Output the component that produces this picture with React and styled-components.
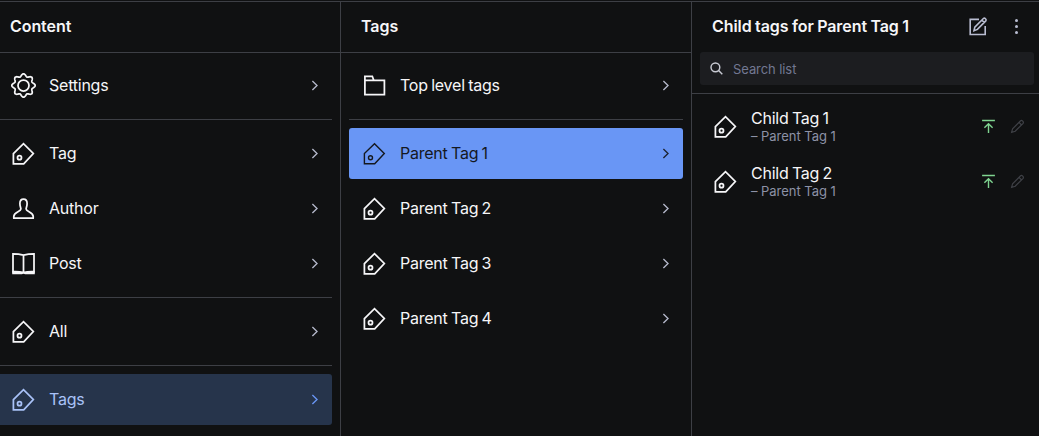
import React from 'react';
import styled, { createGlobalStyle, css } from 'styled-components';

const GlobalStyle = createGlobalStyle`
  * { box-sizing: border-box; }
  body {
    margin: 0;
    background: #101112;
    color: #f6f6f8;
    font-family: Inter, "Liberation Sans", sans-serif;
    font-size: 16px;
    overflow: hidden;
  }
`;

const line = '#3d3f45';

const Desk = styled.div`
  display: grid;
  grid-template-columns: 341px 351px 1fr;
  height: 436px;
  padding-top: 1px;
  overflow: hidden;
`;

const Pane = styled.section`
  border-top: 1px solid ${line};
  border-right: ${(p) => (p.$last ? 'none' : `1px solid ${line}`)};
  min-width: 0;
  overflow: hidden;
`;

const PaneHeader = styled.header`
  border-bottom: 1px solid ${line};
  height: ${(p) => (p.$search ? 92 : 51)}px;
  padding-left: ${(p) => p.$inset}px;
`;

const TitleRow = styled.div`
  display: flex;
  align-items: center;
  height: 50px;
`;

const Title = styled.h2`
  margin: 0;
  padding-bottom: 2px;
  flex: 1;
  font-size: 16px;
  font-weight: 600;
  line-height: 20px;
  letter-spacing: -0.07px;
  word-spacing: -0.5px;
  white-space: nowrap;
`;

const HeaderActions = styled.div`
  display: flex;
  align-items: center;
  gap: 14px;
  margin-right: 10px;
  padding-bottom: 1px;
  color: #b9bdd1;
`;

const SearchBox = styled.div`
  display: flex;
  align-items: center;
  gap: 4px;
  height: 33px;
  margin: 0 5px 0 -12px;
  padding-left: 4px;
  border-radius: 3px;
  background: #1c1d20;
  color: #c8cad3;
`;

const Placeholder = styled.span`
  font-size: 13px;
  line-height: 18px;
  letter-spacing: -0.08px;
  color: #727892;
`;

const List = styled.nav`
  display: flex;
  flex-direction: column;
  gap: 4px;
  padding: 7px 8px 0 ${(p) => p.$left}px;
`;

const tones = {
  plain: css``,
  selected: css`
    background: #6996f5;
    color: #15181e;
  `,
  active: css`
    background: #26344b;
    color: #a9c2f8;
  `,
};

const chevronTones = { plain: '#b4b8ca', selected: '#1b2333', active: '#6996f5' };

const Item = styled.div`
  display: flex;
  align-items: center;
  flex: none;
  height: 51px;
  padding: 0 ${(p) => p.$end ?? 5}px 0 ${(p) => p.$pad}px;
  border-radius: ${(p) => (p.$bleed ? '0 3px 3px 0' : '3px')};
  ${(p) => tones[p.$tone]}
`;

const Label = styled.span`
  flex: 1;
  margin-left: 13px;
  padding-bottom: 2px;
  line-height: 20px;
  letter-spacing: -0.23px;
  word-spacing: -0.9px;
`;

const ChevronSlot = styled.span`
  display: flex;
  color: ${(p) => chevronTones[p.$tone]};
`;

const Divider = styled.hr`
  flex: none;
  width: 100%;
  height: 1px;
  margin: 4px 0;
  border: 0;
  background: ${line};
`;

const ChildText = styled.div`
  flex: 1;
  margin-left: 13px;
  padding-bottom: 2px;
`;

const ChildName = styled.div`
  line-height: 20px;
  letter-spacing: -0.23px;
  word-spacing: -0.9px;
`;

const ChildMeta = styled.div`
  font-size: 13px;
  line-height: 16px;
  letter-spacing: -0.04px;
  color: #8d92a6;
`;

const Status = styled.span`
  display: flex;
  margin-left: ${(p) => p.$gap || 0}px;
  color: ${(p) => p.$color};
`;

const Svg = styled.svg`
  display: block;
  flex: none;
  width: ${(p) => p.$size || 25}px;
  height: ${(p) => p.$size || 25}px;
  fill: none;
  stroke: currentColor;
  stroke-width: ${(p) => p.$stroke || 1.75};
`;

const gearPath =
  Array.from({ length: 144 }, (_, i) => {
    const a = (i / 144) * Math.PI * 2;
    const r = 10.4 + 1.3 * Math.cos(8 * a);
    return `${i ? 'L' : 'M'}${(12.5 + r * Math.cos(a)).toFixed(2)} ${(12.5 + r * Math.sin(a)).toFixed(2)}`;
  }).join('') + 'Z';

const icons = {
  cog: (
    <>
      <path d={gearPath} />
      <circle cx="12.5" cy="12.5" r="5.5" />
    </>
  ),
  tag: (
    <>
      <path d="M2.4 22.8V12.5L12.5 2.7L22.3 12.5L12.7 22.8Z" />
      <circle cx="8.5" cy="16.7" r="2" />
    </>
  ),
  user: (
    <path
      strokeLinejoin="round"
      d="M2.8 22.2V20.5C2.8 16 9.9 15.8 9.9 13C9.9 11.4 8.9 10.5 8.9 7.4C8.9 4.6 10.2 3 12.5 3S16.1 4.6 16.1 7.4C16.1 10.5 15.1 11.4 15.1 13C15.1 15.8 22.2 16 22.2 20.5V22.2Z"
    />
  ),
  book: (
    <>
      <path d="M12.5 4.2C9 3.2 5.4 2.8 2 2.8V20.7C5.4 20.5 9 20.7 12.5 21.7C16 20.7 19.6 20.5 23 20.7V2.8C19.6 2.8 16 3.2 12.5 4.2ZM12.5 4.2V21.5" />
      <path d="M1.2 20.3C5.5 20.1 9 20.4 12.5 21.2C16 20.4 19.5 20.1 23.8 20.3V23.3H14L12.5 22.5L11 23.3H1.2Z" fill="currentColor" stroke="none" />
    </>
  ),
  folder: <path d="M2.9 7.3V3.3H10.3L11.8 7.3H22.4V21.5H2.9V7.3H11.8" />,
};

const Glyph = ({ name, stroke }) => (
  <Svg viewBox="0 0 25 25" $stroke={stroke}>
    {icons[name]}
  </Svg>
);

const Chevron = () => (
  <Svg viewBox="0 0 25 25" $stroke={1.35}>
    <path d="M10.4 8.1L15 12.5L10.4 16.9" />
  </Svg>
);

const ComposeIcon = () => (
  <Svg viewBox="0 0 25 25" $stroke={1.6}>
    <path d="M14 5.4H5.2V20.5H20.2V12" />
    <path d="M9 16.7L9.8 13.1L18.4 4.5C19.7 3.4 21.9 5.5 20.8 6.9L12.4 15.4L9 16.7ZM16.9 6.1L19.3 8.5" />
  </Svg>
);

const MenuIcon = () => (
  <Svg viewBox="0 0 25 25">
    {[6.6, 12.5, 18.4].map((y) => (
      <circle key={y} cx="12.5" cy={y} r="1.5" fill="currentColor" stroke="none" />
    ))}
  </Svg>
);

const SearchIcon = () => (
  <Svg viewBox="0 0 25 25" $stroke={1.45}>
    <circle cx="11.4" cy="11.3" r="4.4" />
    <path d="M14.6 14.5L18.3 18.2" />
  </Svg>
);

const PublishIcon = () => (
  <Svg viewBox="0 0 21 21" $size={21} $stroke={1.4}>
    <path d="M4.1 4.5H16.9M10.5 17V7.8M6.4 11.8L10.5 7.7L14.6 11.8" />
  </Svg>
);

const EditIcon = () => (
  <Svg viewBox="0 0 21 21" $size={21} $stroke={1.2}>
    <path d="M4.6 16.4L5.6 12.7L13.6 4.8C14.9 3.8 17.1 5.9 16.1 7.3L8.2 15.2L4.6 16.4ZM12 6.4L14.6 9" />
  </Svg>
);

const Row = ({ icon = 'tag', tone = 'plain', bleed, children }) => (
  <Item $tone={tone} $bleed={bleed} $pad={bleed ? 11 : 13}>
    <Glyph name={icon} stroke={tone === 'selected' ? 1.4 : 1.75} />
    <Label>{children}</Label>
    <ChevronSlot $tone={tone}>
      <Chevron />
    </ChevronSlot>
  </Item>
);

const ChildRow = ({ name, parent }) => (
  <Item $tone="plain" $pad={13} $end={3}>
    <Glyph name="tag" />
    <ChildText>
      <ChildName>{name}</ChildName>
      <ChildMeta>– {parent}</ChildMeta>
    </ChildText>
    <Status $color="#7fd490">
      <PublishIcon />
    </Status>
    <Status $color="#3f4147" $gap={8}>
      <EditIcon />
    </Status>
  </Item>
);

export default function App() {
  return (
    <>
      <GlobalStyle />
      <Desk>
        <Pane>
          <PaneHeader $inset={10}>
            <TitleRow>
              <Title>Content</Title>
            </TitleRow>
          </PaneHeader>
          <List $left={0}>
            <Row icon="cog" bleed>Settings</Row>
            <Divider />
            <Row bleed>Tag</Row>
            <Row icon="user" bleed>Author</Row>
            <Row icon="book" bleed>Post</Row>
            <Divider />
            <Row bleed>All</Row>
            <Divider />
            <Row tone="active" bleed>Tags</Row>
          </List>
        </Pane>
        <Pane>
          <PaneHeader $inset={20}>
            <TitleRow>
              <Title>Tags</Title>
            </TitleRow>
          </PaneHeader>
          <List $left={8}>
            <Row icon="folder">Top level tags</Row>
            <Divider />
            <Row tone="selected">Parent Tag 1</Row>
            <Row>Parent Tag 2</Row>
            <Row>Parent Tag 3</Row>
            <Row>Parent Tag 4</Row>
          </List>
        </Pane>
        <Pane $last>
          <PaneHeader $search $inset={20}>
            <TitleRow>
              <Title>Child tags for Parent Tag 1</Title>
              <HeaderActions>
                <ComposeIcon />
                <MenuIcon />
              </HeaderActions>
            </TitleRow>
            <SearchBox>
              <SearchIcon />
              <Placeholder>Search list</Placeholder>
            </SearchBox>
          </PaneHeader>
          <List $left={8}>
            <ChildRow name="Child Tag 1" parent="Parent Tag 1" />
            <ChildRow name="Child Tag 2" parent="Parent Tag 1" />
          </List>
        </Pane>
      </Desk>
    </>
  );
}
